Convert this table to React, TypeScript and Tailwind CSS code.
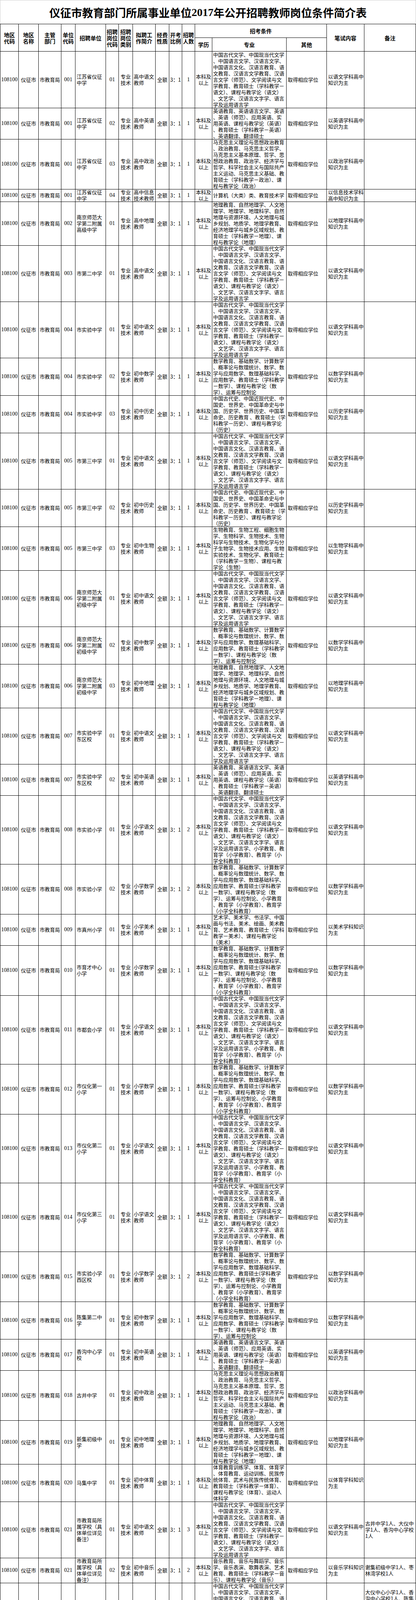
import React from "react";

type Row = {
  unit: string;
  name: string[];
  post: string;
  intro: string[];
  ratio?: string;
  count: string;
  edu?: string[];
  major: string[];
  other?: string[];
  exam: string[];
  remark?: string[];
  h?: number;
};

const YW = [
  "中国古代文学、中国现当代文学",
  "、中国语言文学、汉语言文学、",
  "中国语言文化、汉语言教育、语",
  "文教育、汉语言文学教育、汉语",
  "言文学（师范）、文学阅读与文",
  "学教育、教育硕士（学科教学－",
  "语文）、课程与教学论（语文）",
  "、文艺学、汉语言文字学、语言",
  "学及运用语言学",
];
const YWP = [
  ...YW.slice(0, 8),
  "学及运用语言学、小学教育、教",
  "育学（小学教育）、教育学（小",
  "学全科教育）",
];
const EN = [
  "英语教育、英语语言文学、英语",
  "、英语（师范）、应用英语、实",
  "用英语、课程与教学论（英语）",
  "、教育硕士（学科教学－英语）",
  "、英语翻译、翻译硕士",
];
const ENP = [
  "英语教育、英语语言文学、英语",
  "、英语（师范）、应用英语、实",
  "用英语、课程与教学论（英语）",
  "、教育硕士(学科教学－英语)、",
  "英语翻译、翻译硕士、小学教育",
  "（英语）",
];
const POL = [
  "马克思主义理论与思想政治教育",
  "、政治教育、马克思主义哲学、",
  "马克思主义基本原理、哲学、思",
  "想政治教育、政治学、经济学与",
  "哲学、科学社会主义与国际共产",
  "主义运动、马克思主义基础、教",
  "育硕士（学科教学－政治）、课",
  "程与教学论（政治）",
];
const GEO = [
  "地理教育、自然地理学、人文地",
  "理学、地理学、地理科学、自然",
  "地理与资源环境、人文地理与城",
  "乡规划、地质学、地理学教育、",
  "经济地理学与城乡区域规划、教",
  "育硕士（学科教学－地理）、课",
  "程与教学论（地理）",
];
const MATH = [
  "数学教育、基础数学、计算数学",
  "、概率论与数理统计、数学、数",
  "学与应用数学、数理基础科学、",
  "应用数学、教育硕士（学科教学",
  "－数学）、课程与教学论（数",
  "学）、运筹与控制论",
];
const MATHP = [
  "数学教育、基础数学、计算数学",
  "、概率论与数理统计、数学、数",
  "学与应用数学、数理基础科学、",
  "应用数学、教育硕士(学科教学",
  "－数学)、课程与教学论（数",
  "学）、运筹与控制论、小学教育",
  "、教育学（小学教育）、教育学",
  "（小学全科教育）",
];
const HIS = [
  "中国古代史、中国近现代史、中",
  "国史、世界史、中国革命史与中",
  "国、历史学、世界历史、中国革",
  "命史、历史教育 、教育硕士（学",
  "科教学－历史）、课程与教学论",
  "（历史）",
];
const BIO = [
  "生物教育、生物工程、细胞生物",
  "学、生物科学、生物技术、生物",
  "科学与生物技术、生物化学与分",
  "子生物学、生物技术应用、生物",
  "实验技术、生物化学、教育硕士",
  "（学科教学－生物）、课程与教",
  "学论（生物）",
];
const ART = [
  "艺术学、美术学、书法学、中国",
  "画与书法、美术、绘画、美术教",
  "育、艺术教育、教育硕士（学科",
  "教学－美术）、课程与教学论",
  "（美术）",
];
const PE = [
  "体育教育训练学、体育、体育学",
  "、体育教育、运动训练、民族传",
  "统体育、武术与民族传统体育、",
  "教育硕士（学科教学－体育）、",
  "课程与教学论（体育）、运动人",
  "体科学",
];
const PEP = [
  "体育教育训练学、体育、体育学",
  "、体育教育、运动训练、民族传",
  "统体育、武术与民族传统体育、",
  "教育硕士(学科教学－体育)、课",
  "程与教学论（体育）、运动人体",
  "科学",
];
const MUS = [
  "音乐教育、音乐与舞蹈学、音乐",
  "学、音乐表演、歌舞表演、艺术",
  "教育、教育硕士（学科教学－音",
  "乐）、课程与教学论（音乐）",
];
const MUSP = [
  "音乐教育、音乐与舞蹈学、音乐",
  "学、音乐表演、歌舞表演、艺术",
  "教育、教育硕士(学科教学－音",
  "乐)、课程与教学论（音乐）",
];
const KG = ["学前教育、学前教育学、幼儿教", "育"];

const ex = (s: string) => [`以${s}学科高中`, "知识为主"];
const EX_KG = ["以学前教育专业", "知识为主"];

const JS = ["江苏省仪征", "中学"];
const NSG = ["南京师范大", "学第二附属", "高级中学"];
const NSC = ["南京师范大", "学第二附属", "初级中学"];
const E21 = ["市教育局所", "属学校（具", "体单位详见", "备注）"];
const T26 = ["镇公办幼儿", "园（具体单", "位详见备", "注）"];
const T = (a: string, b = "教师") => [a, b];
const KGI = ["幼儿园教", "师"];

const rows: Row[] = [
  { unit: "001", name: JS, post: "01", intro: T("高中语文"), count: "1", major: YW, exam: ex("语文") },
  { unit: "001", name: JS, post: "02", intro: T("高中英语"), count: "1", major: EN, exam: ex("英语") },
  { unit: "001", name: JS, post: "03", intro: T("高中政治"), count: "1", major: POL, exam: ex("政治") },
  { unit: "001", name: JS, post: "04", intro: ["高中信息", "技术教师"], count: "1", major: ["计算机（大类）类、教育技术学"], exam: ["以信息技术学科", "高中知识为主"] },
  { unit: "002", name: NSG, post: "01", intro: T("高中地理"), count: "1", major: GEO, exam: ex("地理") },
  { unit: "003", name: ["市第二中学"], post: "01", intro: T("高中语文"), count: "1", major: YW, exam: ex("语文") },
  { unit: "004", name: ["市实验中学"], post: "01", intro: T("初中语文"), count: "1", major: YW, exam: ex("语文") },
  { unit: "004", name: ["市实验中学"], post: "02", intro: T("初中数学"), count: "1", major: MATH, exam: ex("数学") },
  { unit: "004", name: ["市实验中学"], post: "03", intro: T("初中历史"), count: "1", major: HIS, exam: ex("历史") },
  { unit: "005", name: ["市第三中学"], post: "01", intro: T("初中语文"), count: "1", major: YW, exam: ex("语文") },
  { unit: "005", name: ["市第三中学"], post: "02", intro: T("初中历史"), count: "1", major: HIS, exam: ex("历史") },
  { unit: "005", name: ["市第三中学"], post: "03", intro: T("初中生物"), count: "1", major: BIO, exam: ex("生物") },
  { unit: "006", name: NSC, post: "01", intro: T("初中语文"), count: "1", major: YW, exam: ex("语文") },
  { unit: "006", name: NSC, post: "02", intro: T("初中数学"), count: "1", major: MATH, exam: ex("数学") },
  { unit: "006", name: NSC, post: "03", intro: T("初中地理"), count: "1", major: GEO, exam: ex("地理") },
  { unit: "007", name: ["市实验中学", "东区校"], post: "01", intro: T("初中语文"), count: "1", major: YW, exam: ex("语文") },
  { unit: "007", name: ["市实验中学", "东区校"], post: "02", intro: T("初中英语"), count: "1", major: EN, exam: ex("英语") },
  { unit: "008", name: ["市实验小学"], post: "01", intro: T("小学语文"), count: "2", major: YWP, exam: ex("语文") },
  { unit: "008", name: ["市实验小学"], post: "02", intro: T("小学数学"), count: "2", major: MATHP, exam: ex("数学") },
  { unit: "009", name: ["市真州小学"], post: "01", intro: T("小学美术"), count: "1", major: ART, exam: ["以美术学科知识", "为主"] },
  { unit: "010", name: ["市育才中心", "小学"], post: "01", intro: T("小学数学"), count: "1", major: MATHP, exam: ex("数学") },
  { unit: "011", name: ["市都会小学"], post: "01", intro: T("小学语文"), count: "1", major: YWP, exam: ex("语文") },
  { unit: "012", name: ["市仪化第一", "小学"], post: "01", intro: T("小学数学"), count: "1", major: MATHP, exam: ex("数学") },
  { unit: "013", name: ["市仪化第二", "小学"], post: "01", intro: T("小学语文"), count: "1", major: YWP, exam: ex("语文") },
  { unit: "014", name: ["市仪化第三", "小学"], post: "01", intro: T("小学语文"), count: "1", major: YWP, exam: ex("语文") },
  { unit: "015", name: ["市实验小学", "西区校"], post: "01", intro: T("小学数学"), count: "2", major: MATHP, exam: ex("数学") },
  { unit: "016", name: ["陈集第二中", "学"], post: "01", intro: T("初中数学"), count: "1", major: MATH, exam: ex("数学") },
  { unit: "017", name: ["香沟中心学", "校"], post: "01", intro: T("初中英语"), count: "1", major: EN, exam: ex("英语") },
  { unit: "018", name: ["古井中学"], post: "01", intro: T("初中政治"), count: "1", major: POL, exam: ex("政治") },
  { unit: "019", name: ["新集初级中", "学"], post: "01", intro: T("初中地理"), count: "1", major: GEO, exam: ex("地理") },
  { unit: "020", name: ["马集中学"], post: "01", intro: T("初中体育"), count: "1", major: PE, exam: ["以体育学科知识", "为主"] },
  { unit: "021", name: E21, post: "01", intro: T("初中语文"), count: "3", major: YW, exam: ex("语文"), remark: ["古井中学1人、大仪中", "学1人、香沟中心学校", "1人"] },
  { unit: "021", name: E21, post: "02", intro: T("初中音乐"), count: "2", major: MUS, exam: ["以音乐学科知识", "为主"], remark: ["谢集初级中学1人、枣", "林湾学校1人"] },
  {
    unit: "021", name: E21, post: "03", intro: T("小学语文"), count: "10", major: YWP, exam: ex("语文"),
    remark: ["大仪中心小学1人、香", "沟中心学校1人、陈集", "镇中心小学1人、青山", "小学1人、新集中心小", "学1人、枣林湾学校1", "人、谢集中心小学1人", "、月塘镇移居小学1人", "、马集镇新民小学1人", "、扬子学校1人"],
  },
  { unit: "021", name: E21, post: "04", intro: T("小学数学"), count: "4", major: MATHP, exam: ex("数学"), remark: ["陈集镇中心小学1人、", "新集中心小学1人、月", "塘中心小学1人、十二", "圩黄泥小学1人"] },
  { unit: "021", name: E21, post: "05", intro: T("小学英语"), count: "5", major: ENP, exam: ex("英语"), remark: ["陈集镇第二中心小学1", "人、龙河中心小学1人", "、马集镇中心小学1人", "、古井中心小学1人、", "扬子学校1人"] },
  { unit: "021", name: E21, post: "06", intro: T("小学音乐"), count: "4", major: MUSP, exam: ["以音乐学科知识", "为主"], remark: ["大仪中心小学1人、大", "巷中心小学1人、古井", "中心小学1人、刘集镇", "中心小学1人"] },
  { unit: "021", name: E21, post: "07", intro: T("小学体育"), count: "2", major: PEP, exam: ["以体育学科知识", "为主"], remark: ["胥浦中心小学1人、张", "集小学1人"] },
  { unit: "021", name: E21, post: "08", intro: T("小学美术"), count: "2", major: ART, exam: ["以美术学科知识", "为主"], remark: ["刘集镇中心小学1人、", "青山中心学校1人"] },
  { unit: "022", name: ["市实验幼儿", "园"], post: "01", intro: KGI, count: "3", edu: ["大专及", "以上"], major: KG, other: [], exam: EX_KG },
  { unit: "023", name: ["市振兴幼儿", "园"], post: "01", intro: KGI, count: "3", edu: ["大专及", "以上"], major: KG, other: [], exam: EX_KG },
  { unit: "024", name: ["市真州幼儿", "园"], post: "01", intro: KGI, count: "2", edu: ["大专及", "以上"], major: KG, other: [], exam: EX_KG },
  { unit: "025", name: ["市都会幼儿", "园"], post: "01", intro: KGI, count: "2", edu: ["大专及", "以上"], major: KG, other: [], exam: EX_KG },
  {
    unit: "026", name: T26, post: "01", intro: KGI, count: "4", edu: ["大专及", "以上"], major: KG, other: [], exam: EX_KG, h: 84,
    remark: ["大仪镇中心幼儿园1人", "、青山镇中心幼儿园1", "人、新集镇幼儿教育", "中心1人、月塘镇谢集", "中心幼儿园1人"],
  },
  {
    unit: "026", name: T26, post: "02", intro: KGI, ratio: "不限", count: "6", edu: ["大专及", "以上"], major: KG, exam: EX_KG,
    other: ["根据《省人力资", "源社会保障厅", "省教育厅关于进", "一步做好免费幼", "儿师范男生就业", "工作的通知》", "(苏人社发〔", "2016〕46号)文", "件精神，面向仪", "征市生源江苏省", "2012级免费幼儿", "师范男生"],
    remark: ["大仪镇中心幼儿园1人", "、陈集镇中心幼儿园1", "人、刘集镇幼儿园1人", "、马集镇中心幼儿园1", "人、新集镇幼儿教育", "中心1人、新城镇中心", "幼儿园1人，任教年限", "按照省有关规定及其", "培养就业协议执行"],
  },
];

const COLS =
  "grid grid-cols-[48px_51px_58px_36px_78px_33px_36px_58px_35px_33px_33px_44px_190px_103px_96px_132px]";

function Lines({ lines }: { lines: string[] }) {
  return (
    <div>
      {lines.map((l, i) => (
        <div key={i} className="h-[16px] whitespace-pre leading-[16px]">
          {l}
        </div>
      ))}
    </div>
  );
}

function C({
  children,
  center,
  pad = "pl-[3px]",
  extra = "",
}: {
  children?: React.ReactNode;
  center?: boolean;
  pad?: string;
  extra?: string;
}) {
  return (
    <div
      className={`flex min-h-0 items-center border-r border-black ${
        center ? "justify-center text-center" : pad
      } ${extra}`}
    >
      {children}
    </div>
  );
}

function H({ lines, extra = "" }: { lines: string[]; extra?: string }) {
  return (
    <div
      className={`flex min-h-0 items-center justify-center border-r border-b border-black text-center ${extra}`}
    >
      <Lines lines={lines} />
    </div>
  );
}

const NUM = "font-['Liberation_Serif',serif] text-[14px]";

function DataRow({ r }: { r: Row }) {
  const edu = r.edu ?? ["本科及", "以上"];
  const other = r.other ?? ["取得相应学位"];
  const remark = r.remark ?? [];
  const n = Math.max(
    r.name.length,
    r.intro.length,
    edu.length,
    r.major.length,
    other.length,
    r.exam.length,
    remark.length
  );
  const h = r.h ?? n * 16;
  return (
    <div
      className={`${COLS} grid-rows-[100%] shadow-[0_1px_0_0_#000]`}
      style={{ height: h }}
    >
      <C center extra={`border-l ${NUM}`}>108100</C>
      <C center>仪征市</C>
      <C center>市教育局</C>
      <C center extra={NUM}>{r.unit}</C>
      <C>
        <Lines lines={r.name} />
      </C>
      <C center extra={NUM}>{r.post}</C>
      <C center>
        <Lines lines={["专业", "技术"]} />
      </C>
      <C pad="pl-[2px]">
        <Lines lines={r.intro} />
      </C>
      <C center>全额</C>
      <C center>{r.ratio ?? "3：1"}</C>
      <C center extra={NUM}>{r.count}</C>
      <C center>
        <Lines lines={edu} />
      </C>
      <C pad="pl-[2px]">
        <Lines lines={r.major} />
      </C>
      <C>
        <Lines lines={other} />
      </C>
      <C>
        <Lines lines={r.exam} />
      </C>
      <C pad="pl-[2px]">
        <Lines lines={remark} />
      </C>
    </div>
  );
}

export default function App() {
  return (
    <div className="w-[1064px] bg-white text-black font-['Noto_Sans_CJK_SC',sans-serif] shadow-[inset_0_0_0_1px_#cfcfcf]">
      <div className="flex h-[62px] items-center justify-center border-b border-black pt-[2px] text-[28px] font-bold leading-[32px]">
        仪征市教育部门所属事业单位
        <span className="font-['Liberation_Serif',serif]">2017</span>
        年公开招聘教师岗位条件简介表
      </div>
      <div className={`${COLS} h-[70px] grid-rows-[35px_35px] text-[14px] font-bold leading-[16px]`}>
        <H lines={["地区", "代码"]} extra="row-span-2 border-l" />
        <H lines={["地区", "名称"]} extra="row-span-2" />
        <H lines={["主管", "部门"]} extra="row-span-2" />
        <H lines={["单位", "代码"]} extra="row-span-2" />
        <H lines={["招聘单位"]} extra="row-span-2" />
        <H lines={["招聘", "岗位", "代码"]} extra="row-span-2" />
        <H lines={["招聘", "岗位", "类别"]} extra="row-span-2" />
        <H lines={["拟聘工", "作简介"]} extra="row-span-2" />
        <H lines={["经费", "性质"]} extra="row-span-2" />
        <H lines={["开考", "比例"]} extra="row-span-2" />
        <H lines={["招聘", "人数"]} extra="row-span-2" />
        <H lines={["招考条件"]} extra="col-span-3" />
        <H lines={["笔试内容"]} extra="row-span-2" />
        <H lines={["备注"]} extra="row-span-2" />
        <H lines={["学历"]} />
        <H lines={["专业"]} />
        <H lines={["其他"]} />
      </div>
      <div className="text-[13px] leading-[16px]">
        {rows.map((r, i) => (
          <DataRow key={i} r={r} />
        ))}
      </div>
      <div className="pt-[22px] pb-[14px] pl-[3px] text-[14px] font-bold leading-[16px]">
        <div className="h-[16px] whitespace-pre">
          注：1、按照国家和省规定，报考人员均须取得《教师资格条例》规定的相应教师资格证书（其中幼儿园教师岗位须取得幼儿园教师资格证书）；
        </div>
        <div className="h-[16px] whitespace-pre pl-[27px]">
          2、学历等问题参照《江苏省2017年考试录用公务员报考指南》有关规定执行；
        </div>
        <div className="h-[16px] whitespace-pre pl-[27px]">
          3、单位代码为021的市教育局所属学校01-08岗位、单位代码为026的镇公办幼儿园01-02岗位，在各岗位拟聘用人员确定后，由招聘单位所属主管部门负责组织拟聘用
        </div>
        <div className="h-[16px] whitespace-pre">人员按照考试总成绩从高分到低分的顺序自主选择各自受聘单位。</div>
      </div>
    </div>
  );
}
